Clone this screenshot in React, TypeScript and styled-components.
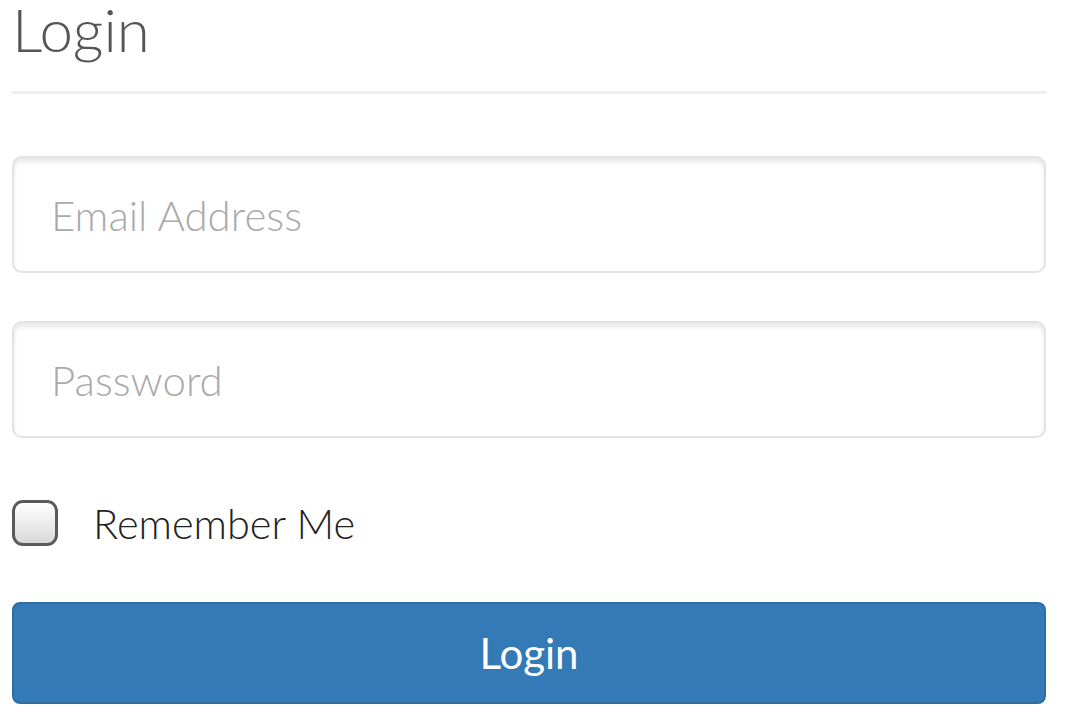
import React from "react";
import styled, { createGlobalStyle } from "styled-components";

const Global = createGlobalStyle`
  html, body { margin: 0; padding: 0; background: #fff; }
  body { font-family: Lato, "Open Sans", sans-serif; }
  * { box-sizing: border-box; }
`;

const Page = styled.div`
  padding: 0 20px 0 12px;
`;

const Header = styled.h1`
  margin: 0;
  font-family: Lato, sans-serif;
  font-weight: 300;
  font-size: 60px;
  line-height: 58px;
  color: #555;
  padding-bottom: 33px;
  border-bottom: 3px solid #eeeeee;
`;

const Form = styled.form`
  display: flex;
  flex-direction: column;
  padding-top: 62px;
`;

const Input = styled.input<{ $gap?: number }>`
  width: 100%;
  height: 117px;
  border: 2px solid #e3e3e3;
  border-radius: 10px;
  box-shadow: inset 0 4px 4px rgba(0, 0, 0, 0.09);
  padding: 0 0 0 37px;
  margin-bottom: ${(p) => p.$gap ?? 48}px;
  font-family: Lato, sans-serif;
  font-weight: 300;
  font-size: 42px;
  color: #555;
  outline: none;
  &::placeholder {
    color: #aaaaaa;
  }
`;

const CheckRow = styled.label`
  display: flex;
  align-items: center;
  gap: 35px;
  height: 46px;
  margin-bottom: 56px;
  font-family: Lato, sans-serif;
  font-weight: 300;
  font-size: 41.5px;
  color: #222;
`;

const Box = styled.input`
  appearance: none;
  margin: 0;
  width: 46px;
  height: 46px;
  border: 3px solid #5a5a5a;
  border-radius: 11px;
  background: linear-gradient(#ffffff, #d8d8d8);
  flex: none;
`;

const Button = styled.button`
  height: 102px;
  width: 100%;
  background: #337ab7;
  border: 2px solid #2e6da4;
  border-radius: 8px;
  color: #fff;
  font-family: Lato, sans-serif;
  font-weight: 400;
  font-size: 42px;
  padding: 0;
  cursor: pointer;
`;

export default function App() {
  return (
    <Page>
      <Global />
      <Header>Login</Header>
      <Form onSubmit={(e) => e.preventDefault()}>
        <Input type="email" placeholder="Email Address" />
        <Input type="password" placeholder="Password" $gap={62} />
        <CheckRow>
          <Box type="checkbox" />
          Remember Me
        </CheckRow>
        <Button type="submit">Login</Button>
      </Form>
    </Page>
  );
}
